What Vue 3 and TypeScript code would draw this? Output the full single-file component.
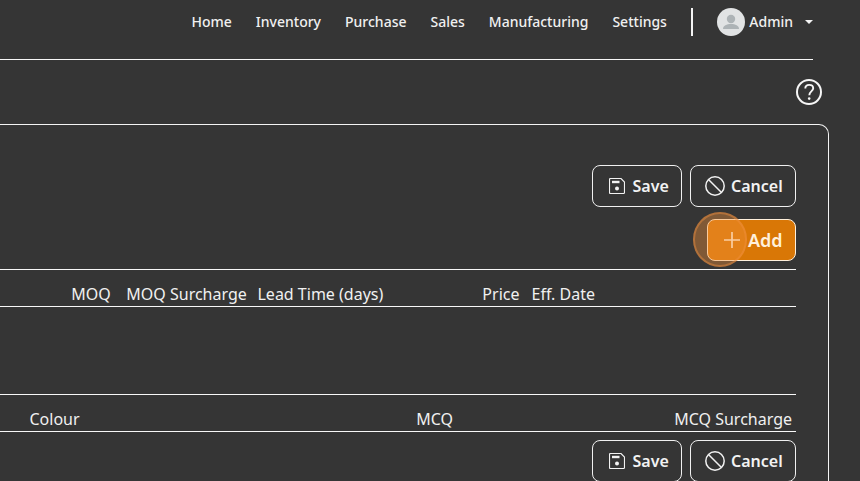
<script setup lang="ts">
interface Column {
  label: string
  key: string
}

const navLinks: string[] = ['Home', 'Inventory', 'Purchase', 'Sales', 'Manufacturing', 'Settings']

const priceColumns: Column[] = [
  { label: 'MOQ', key: 'moq' },
  { label: 'MOQ Surcharge', key: 'moq-surcharge' },
  { label: 'Lead Time (days)', key: 'lead-time' },
  { label: 'Price', key: 'price' },
  { label: 'Eff. Date', key: 'eff-date' },
]

const colourColumns: Column[] = [
  { label: 'Colour', key: 'colour' },
  { label: 'MCQ', key: 'mcq' },
  { label: 'MCQ Surcharge', key: 'mcq-surcharge' },
]

const actionRows: string[] = ['top', 'bottom']
</script>

<template>
  <div class="page">
    <header class="header">
      <nav class="nav">
        <a v-for="link in navLinks" :key="link" class="nav-link">{{ link }}</a>
      </nav>
      <span class="divider"></span>
      <div class="user">
        <svg class="avatar" viewBox="0 0 28 28">
          <circle cx="14" cy="14" r="14" fill="#e1e3e4" />
          <circle cx="14" cy="11" r="4.2" fill="#adb3b6" />
          <path d="M6 21c0-3.200 3.700-5 8-5s8 1.800 8 5z" fill="#adb3b6" />
        </svg>
        <span class="user-name">Admin</span>
        <svg class="caret" viewBox="0 0 8 4"><path d="M0 0h8L4 4z" fill="#f4f4f4" /></svg>
      </div>
    </header>

    <div class="help-row">
      <svg class="help" viewBox="0 0 26 26" fill="none" stroke="#f6f6f6">
        <circle cx="13" cy="13" r="12" stroke-width="2" />
        <path d="M9.300 9.500C9.300 7.200 10.900 5.900 13.200 5.900S17.200 7.300 17.200 9.300C17.200 12 13.300 12.400 13.300 16.300" stroke-width="1.900" />
        <circle cx="13.200" cy="19.600" r="1.300" fill="#f6f6f6" stroke="none" />
      </svg>
    </div>

    <main class="panel">
      <template v-for="row in actionRows" :key="row">
        <div class="actions">
          <button class="btn save" type="button">
            <svg class="save-icon" viewBox="0 0 16 16" fill="none" stroke="#f2f2f2" stroke-width="1.150">
              <path d="M1.500.5h10.500L15.500 4v10.500q0 1-1 1h-13q-1 0-1-1v-13q0-1 1-1z" />
              <path d="M3 4h7.500" stroke-width="2.400" />
              <circle cx="8" cy="10.500" r="2" fill="#f2f2f2" stroke="none" />
            </svg>
            Save
          </button>
          <button class="btn cancel" type="button">
            <svg class="cancel-icon" viewBox="0 0 20 20" fill="none" stroke="#f2f2f2" stroke-width="1.500">
              <circle cx="10" cy="10" r="9.200" />
              <path d="M3.500 3.500l13 13" />
            </svg>
            Cancel
          </button>
        </div>

        <template v-if="row === 'top'">
          <div class="add-row">
            <button class="btn add" type="button">
              <svg class="plus-icon" viewBox="0 0 16 16"><path d="M8 0v16M0 8h16" stroke="#fff6e8" stroke-width="1.700" /></svg>
              Add
              <span class="click-ring"></span>
            </button>
          </div>
          <div class="table-head prices">
            <span v-for="col in priceColumns" :key="col.key" :class="['cell', col.key]">{{ col.label }}</span>
          </div>
          <div class="empty-body"></div>
          <div class="table-head colours">
            <span v-for="col in colourColumns" :key="col.key" :class="['cell', col.key]">{{ col.label }}</span>
          </div>
        </template>
      </template>
    </main>
  </div>
</template>

<style>
body {
  background: #353535;
  overflow: hidden;
}
</style>

<style scoped>
.page {
  box-sizing: border-box;
  width: 860px;
  height: 481px;
  overflow: hidden;
  background: #353535;
  color: #f0f0f0;
  font-family: "Noto Sans", sans-serif;
}
.header {
  box-sizing: border-box;
  width: 813px;
  height: 60px;
  padding-bottom: 15px;
  border-bottom: 1px solid #f8f8f8;
  display: flex;
  align-items: center;
  justify-content: flex-end;
}
.nav {
  display: flex;
  gap: 24px;
}
.nav-link,
.user-name {
  font-size: 14px;
  font-weight: 500;
  line-height: 20px;
}
.divider {
  width: 2px;
  height: 28px;
  margin: 0 24px 0 24.4px;
  background: #f4f4f4;
}
.user {
  display: flex;
  align-items: center;
}
.avatar {
  width: 28px;
  height: 28px;
  margin-right: 4px;
}
.caret {
  width: 8px;
  height: 4px;
  margin-left: 12px;
}
.help-row {
  display: flex;
  justify-content: flex-end;
  padding: 19px 38px 19px 0;
}
.help {
  width: 26px;
  height: 26px;
}
.panel {
  box-sizing: border-box;
  width: 829px;
  height: 400px;
  padding: 40px 32px 0 0;
  border: 1px solid #f4f4f4;
  border-left: 0;
  border-radius: 0 10px 0 0;
}
.actions {
  display: flex;
  justify-content: flex-end;
  gap: 8px;
}
.btn {
  box-sizing: border-box;
  height: 42px;
  padding: 0 0 1px;
  border: 1px solid #f0f0f0;
  border-radius: 8px;
  background: transparent;
  color: #f2f2f2;
  font: 600 16px/24px "Noto Sans", sans-serif;
  display: flex;
  align-items: center;
  position: relative;
}
.save {
  width: 90px;
  padding-left: 16px;
  gap: 7.5px;
}
.cancel {
  width: 106px;
  padding-left: 14px;
  gap: 6px;
}
.save-icon {
  width: 16px;
  height: 16px;
}
.cancel-icon {
  width: 20px;
  height: 20px;
}
.add-row {
  display: flex;
  justify-content: flex-end;
  padding: 12px 0 8px;
}
.add {
  width: 89px;
  padding-left: 16px;
  gap: 8px;
  background: #d97706;
  border-color: #fff0dc;
  color: #fff0dc;
  font-size: 18px;
}
.plus-icon {
  width: 16px;
  height: 16px;
}
.click-ring {
  position: absolute;
  box-sizing: border-box;
  left: -15.5px;
  top: -8px;
  width: 54.5px;
  height: 55px;
  border: 2px solid rgba(240, 144, 64, 0.45);
  border-radius: 50%;
  background: rgba(243, 144, 58, 0.4);
}
.table-head {
  box-sizing: border-box;
  height: 38px;
  padding-top: 12px;
  border: solid #f8f8f8;
  border-width: 1px 0;
  display: grid;
  font-size: 16px;
  line-height: 24px;
  white-space: nowrap;
}
.prices {
  grid-template-columns: 110.8px 136px 136.7px 136px 1fr;
}
.moq,
.moq-surcharge,
.price,
.mcq,
.mcq-surcharge {
  text-align: right;
}
.lead-time {
  padding-left: 10.700px;
}
.eff-date {
  padding-left: 12px;
}
.empty-body {
  height: 87px;
}
.colours {
  grid-template-columns: 227px 226px 1fr;
  margin-bottom: 8px;
}
.colour {
  padding-left: 29.500px;
}
.mcq-surcharge {
  padding-right: 4px;
}
</style>
